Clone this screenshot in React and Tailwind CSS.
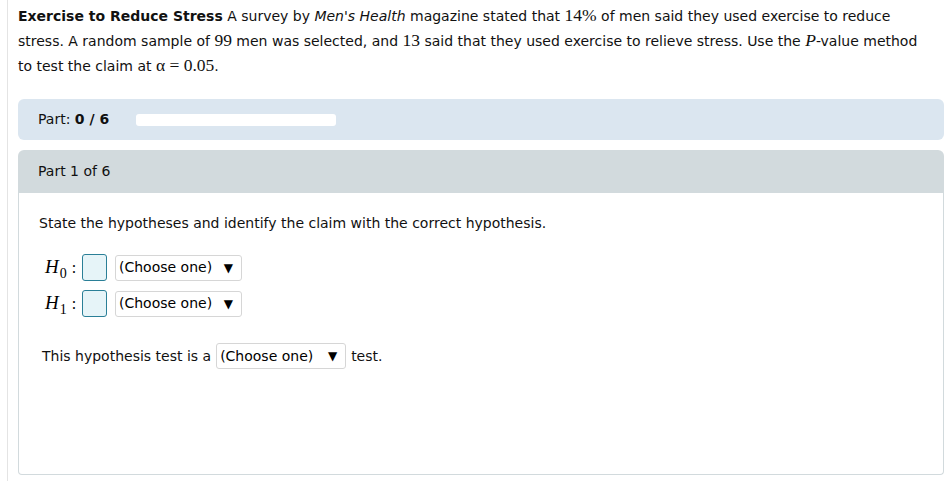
import React from "react";

function Choose({ className = "" }) {
  return (
    <span
      className={`inline-flex items-center justify-between whitespace-nowrap h-[26px] pl-[3px] pr-[8px] border border-[#d6d6d6] rounded-[3px] bg-white text-[14px] text-black ${className}`}
    >
      <span>(Choose one)</span>
      <span className="text-[12px]">▼</span>
    </span>
  );
}

function Hyp({ sub }) {
  return (
    <div className="flex items-center h-[27px]">
      <span className="w-[43px] pl-[6px] whitespace-nowrap font-['Liberation_Serif',serif] text-[19px] italic text-black">
        H
        <span className="not-italic text-[14px] relative top-[5px] ml-[1px]">{sub}</span>
        <span className="not-italic text-[16px] ml-[5px]">:</span>
      </span>
      <span className="w-[25px] h-[27px] border-[1.5px] border-[#2a7f97] rounded-[3px] bg-[#e6f4f8]" />
      <Choose className="ml-[8px] w-[127px]" />
    </div>
  );
}

export default function App() {
  const serif = "font-['Liberation_Serif',serif] text-[17.5px]";
  return (
    <div className="w-[944px] h-[481px] bg-white overflow-hidden font-['DejaVu_Sans','Liberation_Sans',sans-serif] text-[#111]">
      <div className="ml-[7px] border-l border-[#e4e4e4] h-full pl-[10px] pt-[3px]">
        <p className="text-[14px] leading-[24px] pr-[14px]">
          <b>Exercise to Reduce Stress</b> A survey by <i>Men's Health</i> magazine stated that{" "}
          <span className={serif}>14%</span> of men said they used exercise to reduce stress. A random
          sample of <span className={serif}>99</span> men was selected, and{" "}
          <span className={serif}>13</span> said that they used exercise to relieve stress. Use the{" "}
          <span className={`${serif} italic`}>P</span>-value method to test the claim at{" "}
          <span className={serif}>α = 0.05</span>.
        </p>

        <div className="mt-[21px] h-[41px] rounded-[6px] bg-[#dbe6f0] flex items-center pl-[20px] text-[14px]">
          <span className="whitespace-nowrap">
            Part: <b>0 / 6</b>
          </span>
          <span className="ml-[27px] w-[200px] h-[12px] rounded-[3px] bg-white" />
        </div>

        <div className="mt-[10px] h-[325px] flex flex-col">
          <div className="h-[43px] rounded-t-[6px] bg-[#d2dadd] flex items-center pl-[20px] text-[14px]">
            Part 1 of 6
          </div>
          <div className="flex-1 border border-t-0 border-[#d2dadd] rounded-b-[4px] pl-[20px] pt-[20px] text-[14px]">
            <p>State the hypotheses and identify the claim with the correct hypothesis.</p>
            <div className="mt-[20px] flex flex-col gap-[9px]">
              <Hyp sub="0" />
              <Hyp sub="1" />
            </div>
            <div className="mt-[26px] flex items-center pl-[3px] whitespace-nowrap">
              <span>This hypothesis test is a</span>
              <Choose className="ml-[5px] w-[130px]" />
              <span className="ml-[5px]">test.</span>
            </div>
          </div>
        </div>
      </div>
    </div>
  );
}
